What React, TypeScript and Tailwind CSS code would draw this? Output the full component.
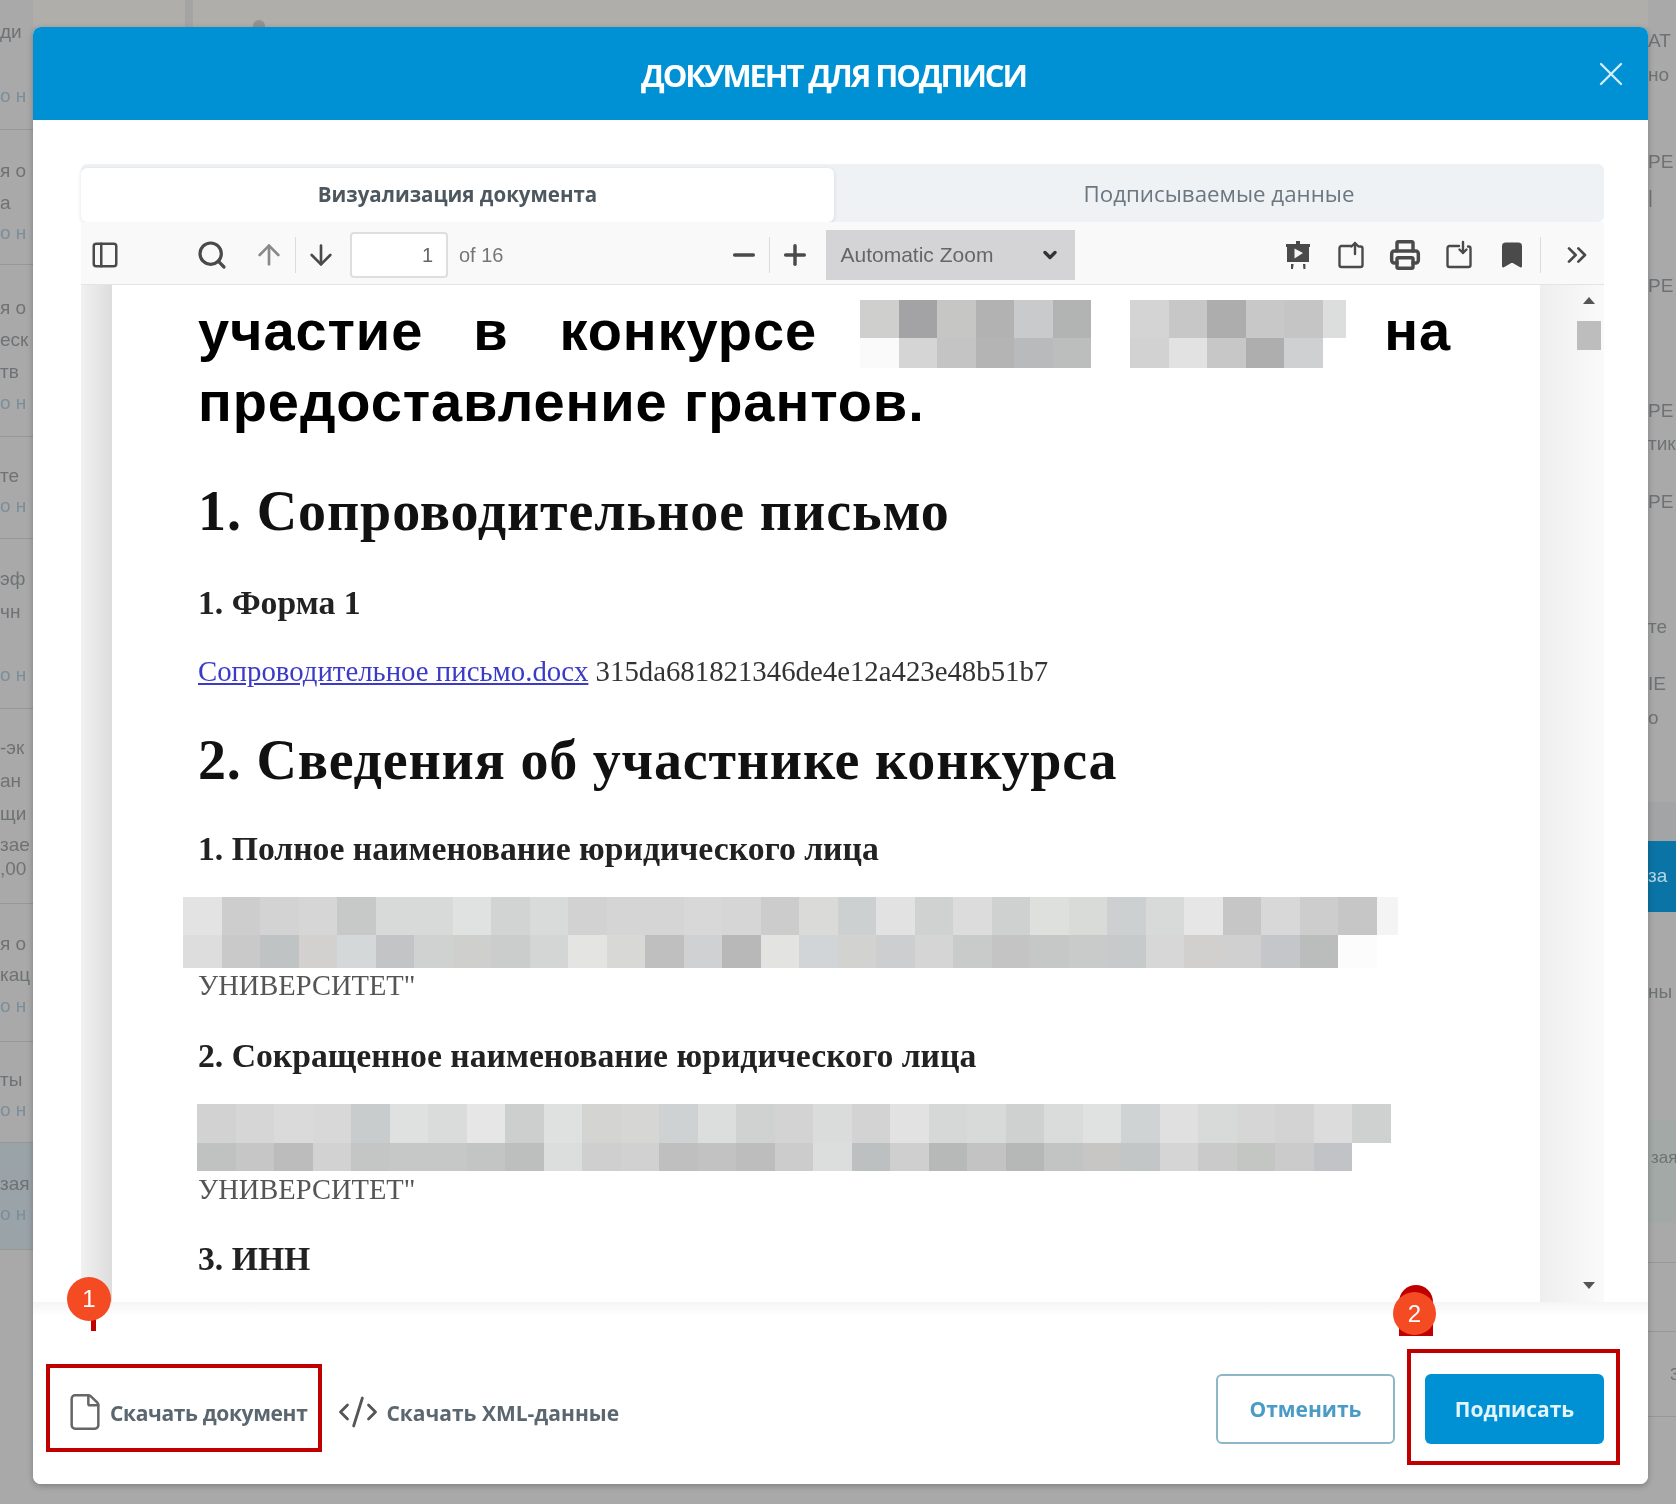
import {
  ArrowDown,
  ArrowUp,
  Bookmark,
  ChevronDown,
  ChevronsRight,
  CodeXml,
  File,
  Minus,
  PanelLeft,
  Plus,
  Printer,
  Search,
  X,
} from "lucide-react";

const sans = "font-['Open_Sans','Noto_Sans',sans-serif]";
const serif = "font-['Liberation_Serif','Times_New_Roman',serif]";
const arial = "font-['Liberation_Sans',Arial,sans-serif]";

const leftRows = [
  { h: 130, cls: "", lines: [["ди", 21], ["о н", 42]] },
  { h: 135, cls: "", lines: [["я о", 30], ["а", 10], ["о н", 8]] },
  { h: 172, cls: "", lines: [["я о", 32], ["еск", 10], ["тв", 10], ["о н", 9]] },
  { h: 102, cls: "", lines: [["те", 28], ["о н", 8]] },
  { h: 170, cls: "", lines: [["эф", 29], ["чн", 11], ["о н", 41]] },
  { h: 195, cls: "", lines: [["-эк", 28], ["ан", 11], ["щи", 11], ["зае", 9], [",00", 2]] },
  { h: 138, cls: "", lines: [["я о", 29], ["кац", 9], ["о н", 9]] },
  { h: 101, cls: "", lines: [["ты", 27], ["о н", 8]] },
  { h: 107, cls: "bg-[#9aa3a8]", lines: [["зая", 30], ["о н", 8]] },
];

const rightTexts = [
  ["АТ", 30],
  ["но", 12],
  ["РЕ", 65],
  ["|", 13],
  ["РЕ", 67],
  ["РЕ", 103],
  ["тик", 11],
  ["РЕ", 36],
  ["те", 103],
  ["IE", 35],
  ["о", 12],
] as const;

const blurTop = [
  ["#cfcfcd", "#a3a3a5", "#c6c6c5", "#b2b2b2", "#c9cacc", "#b2b4b3"],
  ["#fafafa", "#d5d5d6", "#c4c4c4", "#b4b4b4", "#b9babb", "#bcbdbd"],
];
const blurTop2 = [
  ["#d4d4d4", "#c7c7c7", "#adadad", "#c8c8c8", "#c5c5c5", "#dcdddd"],
  ["#d2d2d2", "#e2e2e2", "#c7c7c7", "#aeaeae", "#cfd0d2"],
];
const blurName = [
  ["#e3e3e3", "#cdcdcd", "#d3d3d3", "#d6d6d6", "#c6c9c7", "#d8dada", "#d8dada", "#e0e2e2", "#d2d3d3", "#d9dada", "#d2d2d2", "#d5d5d5", "#d5d5d5", "#d8d8d8", "#d6d6d6", "#cccccc", "#dadbd8", "#cdd0d0", "#e2e2e2", "#d0d2d2", "#dcdcdc", "#cfd0d0", "#dee0de", "#d9dbd9", "#ccd0d0", "#d8d9d9", "#e6e6e6", "#c6c6c6", "#d8d8d8", "#cdcdcd", "#c6c6c6", "#f4f4f4"],
  ["#dddddd", "#c9c9c9", "#bfc3c3", "#d3d1cf", "#d5d8d8", "#c2c4c6", "#d0d2d2", "#cfcfcd", "#cbcccc", "#d4d6d6", "#e4e4e2", "#d8d8d6", "#bfbfbf", "#cfd1d3", "#b8b8b8", "#e3e3e1", "#d2d5d7", "#d2d3d1", "#ccced0", "#d5d5d5", "#c9cbcb", "#c4c4c4", "#c6c8c8", "#c9caca", "#c7caca", "#d7d7d7", "#d1d0ce", "#d0d0d0", "#c4c6c9", "#bbbdbd", "#fcfcfc"],
];
const blurShort = [
  ["#d2d2d2", "#d6d6d6", "#dadada", "#d8d8d8", "#c9cccc", "#dfe1e1", "#dadcdc", "#e5e6e5", "#cdcfcf", "#dfe0e0", "#d4d4d2", "#d6d6d4", "#cfd2d2", "#dcdddd", "#d0d1d1", "#d3d3d3", "#dadcdc", "#d3d3d3", "#e2e2e2", "#d6d8d8", "#d8dada", "#cfd0d0", "#dadbdb", "#e0e1e1", "#d0d3d3", "#e0e0e0", "#d8d9d9", "#d6d6d6", "#d3d3d3", "#dcdcdc", "#cfd1d1"],
  ["#c0c2c2", "#c6c6c6", "#bcbcbc", "#d2d2d2", "#c4c6c6", "#c6c7c7", "#c6c7c7", "#c3c5c5", "#bdbebe", "#dcdddd", "#cfcfcf", "#d1d1d1", "#bfbfbf", "#c2c2c2", "#bdbdbd", "#cccccc", "#dcdddd", "#bdc0c0", "#cfcfcf", "#b7b9b9", "#c3c3c3", "#b6b8b8", "#c2c3c3", "#c8c6c4", "#c2c6c6", "#d5d5d5", "#cacaca", "#c3c6c3", "#cbcbcb", "#c1c3c6"],
];

function PixelBlock({ rows, heights, className = "" }: { rows: string[][]; heights: string[]; className?: string }) {
  return (
    <div className={className}>
      {rows.map((row, r) => (
        <div key={r} className={`flex ${heights[r]}`}>
          {row.map((color, i) => (
            <div key={i} className="w-[38.5px] shrink-0" style={{ backgroundColor: color }} />
          ))}
        </div>
      ))}
    </div>
  );
}

const TrayIcon = ({ down = false }: { down?: boolean }) => (
  <svg width="30" height="30" viewBox="0 0 30 30" fill="none" stroke="#4a4a4a" strokeWidth="2.4" strokeLinecap="round" strokeLinejoin="round">
    <path d="M15 6H5.500a2 2 0 0 0-2 2v17a2 2 0 0 0 2 2h19a2 2 0 0 0 2-2V8.500a2 2 0 0 0-2-2H24" />
    <path d={down ? "M19 2v11M15.500 9.500 19 13l3.500-3.500" : "M19 14V3M15.500 6.500 19 3l3.500 3.500"} />
  </svg>
);

const PresentationIcon = () => (
  <svg width="30" height="30" viewBox="0 0 30 30" fill="#4a4a4a">
    <path d="M13 1h4v3h-4z" />
    <path d="M3 4h24v3h-1v15H4V7H3z" />
    <path d="M11.500 8.500 20 13l-8.500 5.500z" fill="#f4f4f4" />
    <path d="M8 24h2.600l-.6 5H8zM20 24h2.400v5h-2z" />
  </svg>
);

const Sep = () => <div className="w-px h-[36px] bg-[#dcdcdc]" />;

export default function App() {
  return (
    <div className="relative w-[1676px] h-[1504px] overflow-hidden bg-[#a9a9a9] blur-[0.7px]">
      {/* page behind the dialog */}
      <div className="flex h-full">
        <div className={`w-[33px] shrink-0 overflow-hidden ${arial}`}>
          {leftRows.map((row, i) => (
            <div key={i} style={{ height: row.h }} className={`flow-root border-b border-[#979797] ${row.cls}`}>
              {row.lines.map(([t, mt], j) => (
                <p
                  key={j}
                  style={{ marginTop: mt as number }}
                  className={`text-[19px] leading-[22px] whitespace-nowrap ${String(t).startsWith("о н") ? "text-[#7b8e9a]" : "text-[#6f7274]"}`}
                >
                  {t}
                </p>
              ))}
            </div>
          ))}
        </div>
        <div className="flex-1 flex flex-col">
          <div className="flex h-[27px] bg-[#b0aeab]">
            <div className="ml-[152px] w-[8px] bg-[#a4a4a4]" />
            <div className="ml-[60px] mt-[20px] w-[12px] h-[7px] rounded-t-full bg-[#929292]" />
          </div>
        </div>
        <div className={`w-[28px] shrink-0 overflow-hidden flex flex-col ${arial}`}>
          <div className="h-[802px] shrink-0">
            {rightTexts.map(([t, mt], i) => (
              <p key={i} style={{ marginTop: mt }} className="text-[19px] leading-[22px] whitespace-nowrap text-[#6f7274]">
                {t}
              </p>
            ))}
          </div>
          <div className="h-[39px] shrink-0 bg-[#a2a4a5]" />
          <div className="h-[71px] shrink-0 bg-[#0b74a6] pt-[24px] text-[19px] leading-[22px] text-[#b8d5e4] whitespace-nowrap">за</div>
          <p className="mt-[69px] text-[19px] leading-[22px] text-[#6f7274]">ны</p>
          <div className="mt-[117px] h-[103px] shrink-0 bg-[#a2a9a6] pt-[27px] pl-[3px] text-[17px] leading-[22px] text-[#6f7274]">зая</div>
          <div className="h-[40px] shrink-0 border-b border-[#979797]" />
          <div className="h-[69px] shrink-0 border-b border-[#979797]" />
          <div className="h-[85px] shrink-0 border-b border-[#979797] pt-[32px] pl-[22px] text-[17px] leading-[22px] text-[#6f7274]">3</div>
        </div>
      </div>

      {/* dialog */}
      <div className="absolute left-[33px] top-[27px] w-[1615px] h-[1457px] flex flex-col rounded-[8px] bg-white shadow-[0_2px_6px_rgba(0,0,0,0.25)] overflow-hidden">
        <div className="relative h-[93px] shrink-0 flex items-center justify-center pr-[14px] pt-[3px] bg-[#0091d5]">
          <h1 className={`text-white text-[31px] font-bold tracking-[-2.1px] ${sans}`}>ДОКУМЕНТ ДЛЯ ПОДПИСИ</h1>
          <X className="absolute right-[17px] top-[27px] text-[#d7eef9]" size={40} strokeWidth={1.4} />
        </div>

        <div className="pl-[48px] pr-[44px] pt-[44px] flex flex-col">
          <div className="flex h-[58px] rounded-[6px] bg-[#eef2f5]">
            <div className={`w-[753px] mt-[4px] pb-[2px] flex items-center justify-center bg-white rounded-[6px] shadow-[0_1px_4px_rgba(0,0,0,0.12)] text-[20.500px] font-bold text-[#4d5760] ${sans}`}>
              Визуализация документа
            </div>
            <div className={`flex-1 flex items-center justify-center pt-[2px] text-[22.300px] text-[#6d7780] ${sans}`}>Подписываемые данные</div>
          </div>

          <div className={`h-[63px] flex items-center pt-[4px] bg-[#f9f9f9] border-b border-[#e4e4e4] text-[#4a4a4a] ${arial}`}>
            <PanelLeft className="ml-[9px]" size={30} strokeWidth={2} />
            <Search className="ml-[76px]" size={32} strokeWidth={2.4} />
            <ArrowUp className="ml-[25px] text-[#8a8a8a]" size={32} strokeWidth={2} />
            <div className="ml-[10px] mr-[9px]"><Sep /></div>
            <ArrowDown size={32} strokeWidth={2} />
            <div className="ml-[13px] w-[98px] h-[46px] flex items-center justify-end pr-[13px] bg-white border-2 border-[#dedede] rounded-[4px] text-[20px] text-[#666]">1</div>
            <span className="ml-[11px] text-[20px] text-[#767676]">of 16</span>
            <Minus className="ml-[225px]" size={32} strokeWidth={2.6} />
            <div className="ml-[9px] mr-[9px]"><Sep /></div>
            <Plus size={32} strokeWidth={2.6} />
            <div className="ml-[15px] w-[249px] h-[50px] flex items-center justify-between pl-[14px] pr-[15px] bg-[#d4d4d7] text-[21px] text-[#666]">
              <span>Automatic Zoom</span>
              <ChevronDown size={20} strokeWidth={4} className="text-[#333]" />
            </div>
            <div className="ml-[208px] flex items-center gap-[23px]">
              <PresentationIcon />
              <TrayIcon />
              <Printer size={32} strokeWidth={2.6} />
              <TrayIcon down />
              <Bookmark size={30} fill="#4a4a4a" strokeWidth={2} />
            </div>
            <div className="ml-[13px]"><Sep /></div>
            <ChevronsRight className="ml-[20px]" size={32} strokeWidth={2} />
          </div>

          <div className="flex h-[1017px] overflow-hidden bg-white">
            <div className="w-[31px] shrink-0 bg-gradient-to-r from-[#f1f1f1] to-[#dddddd]" />
            <div className={`w-[1428px] pl-[86px] pr-[89px] overflow-hidden ${serif}`}>
              <div className={`mt-[15px] flex items-start h-[68px] text-[56px] tracking-[0.9px] font-bold text-black leading-[62px] ${arial}`}>
                <span>участие</span>
                <span className="ml-[50px]">в</span>
                <span className="ml-[51px]">конкурсе</span>
                <PixelBlock rows={blurTop} heights={["h-[38px]", "h-[30px]"]} className="ml-[43px]" />
                <PixelBlock rows={blurTop2} heights={["h-[38px]", "h-[30px]"]} className="ml-[39px] w-[216px] overflow-hidden" />
                <span className="ml-auto">на</span>
              </div>
              <p className={`mt-[-1px] text-[56px] tracking-[0.9px] font-bold text-black leading-[70px] ${arial}`}>предоставление грантов.</p>

              <h2 className="mt-[43px] text-[56px] tracking-[0.9px] leading-[62px] font-bold text-[#111]">1. Сопроводительное письмо</h2>
              <h3 className="mt-[43px] text-[33.700px] leading-[36px] font-bold text-[#222]">1. Форма 1</h3>
              <p className="mt-[32px] text-[28.800px] leading-[36px] text-[#333] whitespace-nowrap">
                <span className="text-[#3b3bc8] underline">Сопроводительное письмо.docx</span> 315da681821346de4e12a423e48b51b7
              </p>
              <h2 className="pt-[40px] text-[56px] tracking-[0.8px] leading-[62px] font-bold text-[#111] whitespace-nowrap">2. Сведения об участнике конкурса</h2>
              <h3 className="mt-[40px] text-[33.700px] leading-[36px] font-bold text-[#222] whitespace-nowrap">1. Полное наименование юридического лица</h3>

              <PixelBlock rows={blurName} heights={["h-[38px]", "h-[33px]"]} className="mt-[30px] ml-[-15px] w-[1215px] overflow-hidden" />
              <p className="mt-[1px] text-[28.500px] leading-[34px] text-[#555]">УНИВЕРСИТЕТ"</p>
              <h3 className="mt-[35px] text-[33.700px] leading-[36px] font-bold text-[#222] whitespace-nowrap">2. Сокращенное наименование юридического лица</h3>
              <PixelBlock rows={blurShort} heights={["h-[39px]", "h-[28px]"]} className="mt-[30px] ml-[-1px]" />
              <p className="mt-[2px] text-[28.500px] leading-[34px] text-[#555]">УНИВЕРСИТЕТ"</p>
              <h3 className="mt-[34px] text-[33.700px] leading-[36px] font-bold text-[#222]">3. ИНН</h3>
            </div>
            <div className="flex-1 relative bg-gradient-to-r from-[#eeeeee] to-[#fafafa]">
              <div className="absolute right-[3px] top-[36px] w-[24px] h-[29px] bg-[#bdbdbd]" />
              <div className="absolute right-[9px] top-[12px] border-x-[6px] border-x-transparent border-b-[7px] border-b-[#555]" />
              <div className="absolute right-[9px] top-[997px] border-x-[6px] border-x-transparent border-t-[7px] border-t-[#555]" />
            </div>
          </div>
        </div>

        <div className="flex-1 flex items-start pl-[32px] pr-[44px] pt-[72px] bg-gradient-to-b from-[#f5f5f5] to-white to-[14px]">
          <div className={`flex items-center h-[70px] pt-[10px] text-[21px] font-bold text-[#5b6770] ${sans}`}>
            <File size={40} strokeWidth={1.5} className="text-[#666] -translate-y-[2px]" />
            <span className="ml-[5px] tracking-[-0.35px]">Скачать документ</span>
            <CodeXml size={42} strokeWidth={1.6} className="ml-[30px] text-[#555] -translate-y-[2px]" />
            <span className="ml-[7px]">Скачать XML-данные</span>
          </div>
          <div className={`ml-auto flex gap-[30px] text-[21px] font-bold ${sans}`}>
            <button className="w-[179px] h-[70px] pt-[1px] rounded-[6px] border-2 border-[#8db7c6] text-[#4a9cc6]">Отменить</button>
            <button className="w-[179px] h-[70px] pt-[1px] rounded-[6px] bg-[#0091d5] text-[#e2f4fc]">Подписать</button>
          </div>
        </div>
      </div>

      {/* annotation marks */}
      <div className="absolute left-[46px] top-[1364px] w-[276px] h-[88px] border-[4px] border-[#c00000]" />
      <div className="absolute left-[1407px] top-[1349px] w-[213px] h-[116px] border-[4px] border-[#c00000]" />
      <div className="absolute left-[91px] top-[1310px] w-[5px] h-[21px] bg-[#c00000]" />
      <div className={`absolute left-[67px] top-[1277px] w-[44px] h-[44px] rounded-full bg-[#f44b23] flex items-center justify-center text-[24px] text-white ${arial}`}>1</div>
      <div className="absolute left-[1399px] top-[1285px] w-[34px] h-[30px] rounded-t-full bg-[#c00000]" />
      <div className="absolute left-[1399px] top-[1320px] w-[34px] h-[16px] bg-[#c00000]" />
      <div className={`absolute left-[1393px] top-[1292px] w-[43px] h-[43px] rounded-full bg-[#f44b23] flex items-center justify-center text-[24px] text-white ${arial}`}>2</div>
    </div>
  );
}
